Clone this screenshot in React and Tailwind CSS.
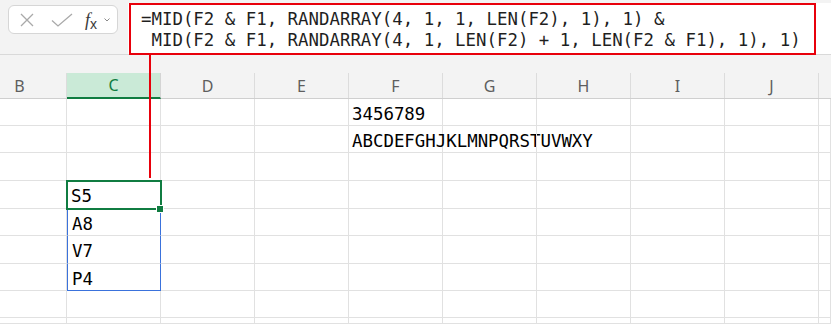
import React from 'react';

// Spreadsheet snippet: formula bar with an annotation box, column headers, grid.

const MONO = "font-['DejaVu_Sans_Mono',monospace]";
const COLS = ['B', 'C', 'D', 'E', 'F', 'G', 'H', 'I', 'J'];
const ROW_H = [27, 27, 28, 28, 27, 28, 27, 27, 6];

// cell text keyed by "row-col"
const CELLS = {
  '0-4': '3456789',
  '1-4': 'ABCDEFGHJKLMNPQRSTUVWXY',
  '3-1': 'S5',
  '4-1': 'A8',
  '5-1': 'V7',
  '6-1': 'P4',
};

// extra classes for the active cell and the spilled range below it
function cellState(r, c) {
  if (c !== 1) return '';
  if (r === 3) return 'relative z-10 outline-2 outline-[#107c41] -outline-offset-1';
  if (r === 4 || r === 5) return 'border-l border-l-[#3a72dc] border-r-[#3a72dc]';
  if (r === 6) return 'border-l border-l-[#3a72dc] border-r-[#3a72dc] border-b-[#3a72dc]';
  return '';
}

function NameBox() {
  return (
    <div className="ml-[8px] mt-[5px] w-[110px] h-[29px] shrink-0 rounded-md border border-[#d6d6d6] bg-white flex items-center">
      <svg width="16" height="16" viewBox="0 0 16 16" className="ml-[10px]">
        <path d="M2 2 L14 14 M14 2 L2 14" stroke="#a9a9a9" strokeWidth="1.3" fill="none" />
      </svg>
      <svg width="22" height="16" viewBox="0 0 22 16" className="ml-[16px]">
        <path d="M1 8.5 L7 14 L21 2" stroke="#a9a9a9" strokeWidth="1.3" fill="none" />
      </svg>
      <span className="ml-[12px] text-[#3a3a3a] font-['Liberation_Serif',serif] italic text-[18px] leading-none">
        f<span className="text-[14px] relative top-[3px] not-italic font-['Liberation_Sans',sans-serif]">x</span>
      </span>
      <svg width="6" height="4" viewBox="0 0 6 4" className="ml-[7px]">
        <path d="M0.5 0.5 L3 3 L5.5 0.5" stroke="#8a8a8a" strokeWidth="1" fill="none" />
      </svg>
    </div>
  );
}

function FormulaBar() {
  return (
    <div className="flex h-[55px] bg-[#f3f3f3] border-b border-[#d9d9d9]">
      <NameBox />
      <div className={`relative z-20 ml-[10px] mt-[3px] flex-1 bg-white pl-[13px] pt-[5.5px] text-[17.4px] leading-[21px] text-[#1f1f1f] whitespace-pre ${MONO}`}>
        <div>=MID(F2 &amp; F1, RANDARRAY(4, 1, 1, LEN(F2), 1), 1) &amp;</div>
        <div> MID(F2 &amp; F1, RANDARRAY(4, 1, LEN(F2) + 1, LEN(F2 &amp; F1), 1), 1)</div>
        {/* annotation box + pointer down to the active cell */}
        <div className="absolute left-[1px] top-0 w-[687px] h-[52px] border-2 border-[#e8000b]">
          <div className="absolute left-[18px] top-full w-[2px] h-[125px] bg-[#e8000b]" />
        </div>
      </div>
    </div>
  );
}

function ColumnHeaders() {
  return (
    <div className="h-[44px] bg-[#f3f3f3] flex flex-col">
      <div className="h-[19px]" />
      <div className="flex-1 grid grid-cols-[67px_repeat(8,94px)_1fr] border-b border-[#cfcfcf] font-['Noto_Sans',sans-serif] text-[16px]">
        {COLS.map((c, i) => (
          <div
            key={c}
            className={
              c === 'C'
                ? 'flex items-center justify-center bg-[#caead7] text-[#107c41] border-r border-[#d4d4d4] border-b-2 border-b-[#107c41] -mb-px'
                : i === 0
                  ? 'flex items-center justify-center pr-[27px] text-[#5e5e5e] border-r border-[#dcdcdc]'
                  : 'flex items-center justify-center text-[#5e5e5e] border-r border-[#dcdcdc]'
            }
          >
            {c}
          </div>
        ))}
        <div />
      </div>
    </div>
  );
}

function Grid() {
  return (
    <div
      className={`grid grid-cols-[67px_repeat(8,94px)_1fr] text-[17.4px] leading-[20px] text-black ${MONO}`}
      style={{ gridTemplateRows: ROW_H.map((h) => `${h}px`).join(' ') }}
    >
      {ROW_H.map((_, r) =>
        Array.from({ length: 10 }).map((__, c) => (
          <div
            key={`${r}-${c}`}
            className={`border-b border-r border-[#e1e1e1] pt-[5px] whitespace-nowrap overflow-visible ${c === 1 ? 'pl-[4px]' : 'pl-[3px]'} ${cellState(r, c)}`}
          >
            {CELLS[`${r}-${c}`] ?? ''}
            {r === 3 && c === 1 && (
              // fill handle
              <span className="absolute -right-[3px] -bottom-[4px] w-[6px] h-[6px] bg-[#107c41] outline outline-1 outline-white" />
            )}
          </div>
        ))
      )}
    </div>
  );
}

export default function App() {
  return (
    <div className="w-[831px] h-[324px] overflow-hidden bg-white">
      <FormulaBar />
      <ColumnHeaders />
      <Grid />
    </div>
  );
}
